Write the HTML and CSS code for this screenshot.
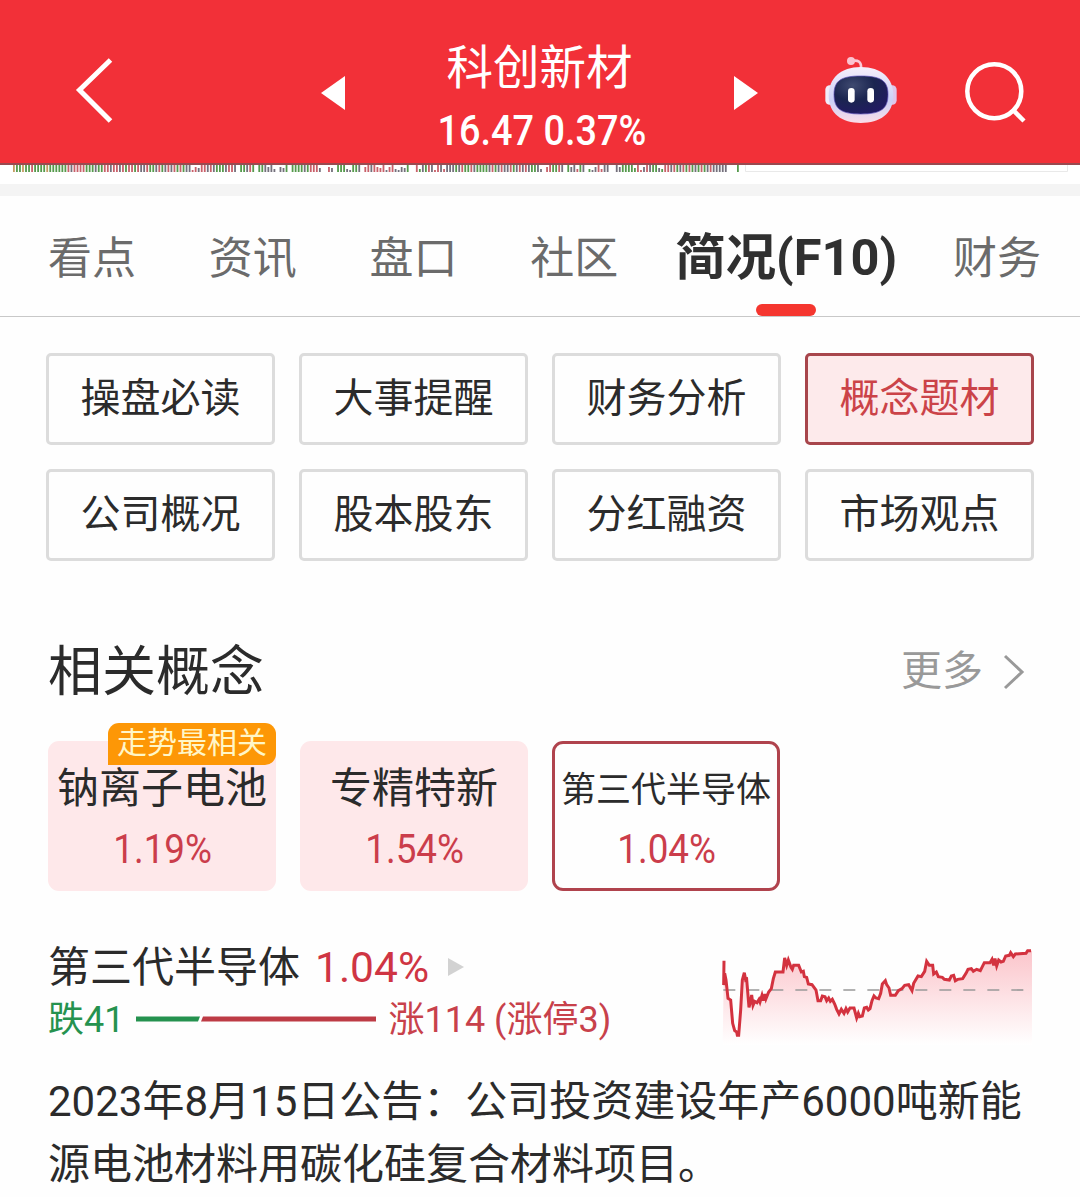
FILE: index.html
```
<!DOCTYPE html>
<html lang="zh-CN">
	<head>
		<meta charset="UTF-8">
		<title>科创新材</title>
		<link rel="stylesheet" href="styles.css">
	</head>
	<body>
		<!--顶部导航-->
		<div class="header">
			<svg class="back" width="40" height="68" viewBox="74 56 40 68"><path d="M110.500 60L79.500 90L110.500 121" /></svg>
			<svg class="prev" width="24" height="34" viewBox="0 0 24 34"><path d="M0 17L24 0V34Z" /></svg>
			<div class="stock">
				<div class="stock-name">科创新材</div>
				<div class="stock-price"><span class="din">16.47 0.37%</span></div>
			</div>
			<svg class="next" width="24" height="34" viewBox="0 0 24 34"><path d="M24 17L0 0V34Z" /></svg>
			<svg class="robot" width="74" height="70" viewBox="72 42 222 210">
				<defs>
					<linearGradient id="head" x1="0" y1="0" x2="0" y2="1">
						<stop offset="0" stop-color="#f6effb" />
						<stop offset="0.6" stop-color="#ccd0f6" />
						<stop offset="1" stop-color="#fbdde8" />
					</linearGradient>
					<radialGradient id="face" cx="0.35" cy="0.25" r="0.8">
						<stop offset="0" stop-color="#3f4a70" />
						<stop offset="0.5" stop-color="#1b2550" />
						<stop offset="1" stop-color="#221a63" />
					</radialGradient>
				</defs>
				<path d="M154 63Q186 56 183 86" fill="none" stroke="#fbc9d6" stroke-width="8" />
				<circle cx="153" cy="63" r="12" fill="#fbc3d0" />
				<rect x="76" y="136" width="30" height="58" rx="13" fill="#f1ecfa" />
				<rect x="260" y="136" width="30" height="58" rx="13" fill="#dfc6ea" />
				<path d="M182 81C245 81 280 115 280 166C280 222 240 249 182 249C126 249 86 222 86 166C86 115 122 81 182 81Z" fill="url(#head)" />
				<path d="M182 108C242 108 264 122 264 163C264 206 244 222 182 222C122 222 102 206 102 163C102 122 124 108 182 108Z" fill="url(#face)" stroke="#5a4fb8" stroke-width="2" />
				<rect x="144" y="144" width="20" height="44" rx="10" fill="#fff" />
				<rect x="202" y="144" width="20" height="44" rx="10" fill="#fff" />
			</svg>
			<svg class="search" width="64" height="64" viewBox="964 60 64 64"><circle cx="994.300" cy="91.300" r="27" /><path d="M1013 110L1024 121" /></svg>
		</div>

		<!--分时成交量-->
		<svg class="volume" id="volume" width="1080" height="19" viewBox="0 0 1080 19">
			<path d="M745.500 0V6.500H1067.500V0" fill="none" stroke="#e9e9e9" />
		</svg>

		<div class="tabs">
			<span>看点</span>
			<span>资讯</span>
			<span>盘口</span>
			<span>社区</span>
			<span class="on">简况(F10)</span>
			<span>财务</span>
		</div>

		<div class="menu">
			<div>操盘必读</div>
			<div>大事提醒</div>
			<div>财务分析</div>
			<div class="on">概念题材</div>
			<div>公司概况</div>
			<div>股本股东</div>
			<div>分红融资</div>
			<div>市场观点</div>
		</div>

		<div class="title">
			<h2>相关概念</h2>
			<span class="more">更多
				<svg width="22" height="36" viewBox="0 0 22 36"><path d="M2 2L19 18L2 34" /></svg>
			</span>
		</div>

		<!--概念卡片-->
		<div class="cards">
			<div class="card">
				<span class="badge">走势最相关</span>
				<div class="card-name">钠离子电池</div>
				<div class="card-rate"><span class="din">1.19%</span></div>
			</div>
			<div class="card">
				<div class="card-name">专精特新</div>
				<div class="card-rate"><span class="din">1.54%</span></div>
			</div>
			<div class="card on">
				<div class="card-name small">第三代半导体</div>
				<div class="card-rate"><span class="din">1.04%</span></div>
			</div>
		</div>

		<!--选中的概念-->
		<div class="concept">
			<div class="info">
				<div class="line1">
					<span>第三代半导体</span>
					<span class="rate">1.04%</span>
					<svg width="18" height="20" viewBox="0 0 18 20"><path d="M1 1L17 10L1 19Z" /></svg>
				</div>
				<div class="line2">
					<span class="down">跌41</span>
					<svg width="240" height="6" viewBox="0 0 240 6">
						<path d="M0 0.500H64L62 5.500H0Z" fill="#25924f" />
						<path d="M67 0.500H240V5.500H65Z" fill="#bd3b45" />
					</svg>
					<span class="up">涨114 (涨停3)</span>
				</div>
			</div>
			<svg class="chart" width="315" height="110" viewBox="30 30 945 330">
				<defs>
					<linearGradient id="area" x1="0" y1="0" x2="0" y2="1">
						<stop offset="0" stop-color="#fbc5cb" />
						<stop offset="1" stop-color="#fff" />
					</linearGradient>
				</defs>
				<path id="fill" fill="url(#area)" />
				<path d="M40 180H945" stroke="#999" stroke-width="5" stroke-dasharray="36 36" />
				<polyline id="line" points="42,92 41,165 44,130 48,150 54,205 62,210 68,280 74,302 80,306 82,316 86,316 92,240 97,150 103,128 107,150 110,148 117,232 122,212 125,195 129,226 134,214 141,218 147,208 150,216 156,196 160,212 165,192 168,206 176,186 184,176 190,146 196,126 219,126 224,84 230,106 235,90 243,112 247,118 251,106 266,106 274,126 280,124 283,140 290,142 295,162 306,164 318,180 324,212 332,212 337,198 345,200 350,212 356,204 361,214 367,208 374,222 380,238 387,252 394,238 402,250 408,236 413,246 420,234 432,234 440,264 445,250 449,260 457,258 463,234 470,232 475,240 480,236 486,212 492,198 498,204 506,206 512,190 517,162 526,152 530,164 537,174 542,196 556,196 565,182 576,176 584,166 596,164 606,182 611,160 624,138 634,140 644,124 650,94 658,106 668,106 671,132 679,126 685,140 697,142 703,148 718,150 724,138 731,136 736,152 743,148 758,146 768,130 774,118 784,116 790,124 800,118 811,122 823,98 840,98 846,88 851,106 855,86 860,108 866,90 873,96 880,94 887,78 898,76 902,68 910,80 916,72 948,70 953,62 963,62" />
			</svg>
		</div>

		<p class="notice">2023年8月15日公告：公司投资建设年产6000吨新能源电池材料用碳化硅复合材料项目。</p>

		<script>
			// 每分钟一根柱 g绿 r红 k灰 o橙 大写为顶满 小写为矮柱 点为空
			var bars = "OGGOGGRGGGGOGGGGGGRKRRRRGGGKGGRRKRRKRGRRGRKKRGGKRGKRKRGRGKKrrkRRKRK" +
				"GGGKRRK.GGKRG.GGKkKk.kkG.GGGGKGRRRk..rk.GGGkkGGK.rRKRrrRkrRkkkkG" +
				"..RgKGRKrRKrKKKGKRGGRKGGGGKRGKRKKRGKRKRKGGKk.rRGGRK.GkKrGK.gkkRrKK" +
				"..KkGGGGgRrkRKGGkgRRKRGKRGRGKGRGKRKKKKK...G";
			var volume = document.getElementById("volume");
			var colors = {g: "#559a4c", r: "#c9606a", k: "#74707c", o: "#c59a62"};
			for(var i = 0; i < bars.length; i++){
				var c = bars.charAt(i);
				if(c == "."){
					continue;
				}
				var low = c == c.toLowerCase();
				var barTop = low ? 2 + i % 4 : 0;
				var rect = document.createElementNS("http://www.w3.org/2000/svg", "rect");
				rect.setAttribute("x", 13 + i * 724 / (bars.length - 1));
				rect.setAttribute("y", barTop);
				rect.setAttribute("width", 1.8);
				rect.setAttribute("height", 7 - barTop);
				rect.setAttribute("fill", colors[c.toLowerCase()]);
				volume.appendChild(rect);
			}

			// 走势线下方的填充
			var points = document.getElementById("line").getAttribute("points");
			document.getElementById("fill").setAttribute("d", "M" + points + " 966,62 966,345 38,345Z");
		</script>
	</body>
</html>
```
FILE: styles.css
```
*{
	margin: 0;
	padding: 0;
	box-sizing: border-box;
}

body{
	width: 1080px;
	height: 1197px;
	overflow: hidden;
	background-color: #fefefe;
	color: #2b2b2b;
	font-family: Roboto, "Noto Sans CJK SC", sans-serif;
}

svg{
	display: block;
	flex: none;
}

/*数字压窄*/
.din{
	display: inline-block;
	transform: scaleX(0.92);
}

/*顶部*/
.header{
	display: flex;
	height: 165px;
	background-color: #f23038;
	border-bottom: 2px solid #984a50;
	color: #fff;
}

.back{
	margin: 56px 0 0 74px;
	fill: none;
	stroke: #fff;
	stroke-width: 5;
}

.prev{
	margin: 76px 0 0 207px;
	fill: #fff;
}

.stock{
	width: 389px;
	padding-top: 38px;
	text-align: center;
	white-space: nowrap;
}

.stock-name{
	height: 60px;
	line-height: 60px;
	font-size: 46.5px;
}

.stock-price{
	height: 60px;
	margin: 3px 0 0 5px;
	line-height: 60px;
	font-size: 42px;
	font-weight: 500;
}

.stock-price .din{
	transform: scaleX(0.9);
}

.next{
	margin-top: 76px;
	fill: #fff;
}

.robot{
	margin: 54px 0 0 66px;
}

.search{
	margin: 60px 0 0 66px;
	fill: none;
	stroke: #fff;
	stroke-width: 4.5;
}

.volume{
	background-color: #fff;
}

/*选项卡*/
.tabs{
	display: flex;
	justify-content: space-between;
	height: 133px;
	padding: 0 39px 0 48px;
	border-top: 12px solid #f4f4f4;
	border-bottom: 1px solid #c8c8c8;
	line-height: 127px;
	font-size: 44px;
	color: #6b6b6b;
	white-space: nowrap;
}

.tabs .on{
	position: relative;
	margin: 0 -17px 0 -16px;
	line-height: 124px;
	font-size: 50.5px;
	font-weight: bold;
	color: #303030;
}

.tabs .on::after{
	content: "";
	position: absolute;
	left: 50%;
	bottom: 0;
	width: 60px;
	height: 12px;
	margin-left: -30px;
	border-radius: 6px;
	background-color: #f5362f;
}

/*二级菜单*/
.menu{
	display: grid;
	grid-template-columns: repeat(4, 229px);
	gap: 24px;
	padding: 36px 46px 0;
}

.menu div{
	height: 92px;
	border: 3px solid #dcdcdc;
	border-radius: 5px;
	line-height: 86px;
	text-align: center;
	font-size: 40px;
}

.menu .on{
	background-color: #fdeaeb;
	border-color: #a8464c;
	color: #cb4348;
}

.title{
	display: flex;
	justify-content: space-between;
	align-items: center;
	height: 80px;
	margin-top: 66px;
	padding: 0 55px 0 48px;
}

.title h2{
	font-size: 54px;
	font-weight: normal;
}

.more{
	display: flex;
	align-items: center;
	gap: 20px;
	font-size: 41px;
	color: #999;
}

.more svg{
	margin-top: 9px;
	fill: none;
	stroke: #999;
	stroke-width: 3;
}

/*概念卡片*/
.cards{
	display: flex;
	gap: 24px;
	margin-top: 34px;
	padding-left: 48px;
}

.card{
	position: relative;
	width: 228px;
	height: 150px;
	padding-top: 18px;
	border-radius: 11px;
	background-color: #fee8ea;
	text-align: center;
	white-space: nowrap;
}

.card.on{
	padding-top: 15px;
	border: 3px solid #b0434d;
	background-color: #fefefe;
}

.card-name{
	height: 60px;
	line-height: 60px;
	font-size: 42px;
}

.card-name.small{
	line-height: 64px;
	font-size: 35px;
}

.card-rate{
	padding-left: 2px;
	line-height: 61px;
	font-size: 40px;
	color: #cb3d4b;
}

.badge{
	position: absolute;
	right: 0;
	top: -18px;
	width: 168px;
	height: 42px;
	border-radius: 11px 11px 11px 0;
	background-color: #fd9706;
	color: #fff6c8;
	line-height: 40px;
	font-size: 30px;
}

/*概念走势*/
.concept{
	display: flex;
	justify-content: space-between;
	margin-top: 49px;
	padding: 0 45px 0 48px;
}

.line1,.line2{
	display: flex;
	align-items: center;
	white-space: nowrap;
}

.line1{
	height: 46px;
	font-size: 42px;
}

.rate{
	margin: 8px 18px 0 15px;
	font-size: 42.5px;
	color: #cf3543;
}

.line1 svg{
	fill: #d2d2d2;
	margin-top: 8px;
}

.line2{
	gap: 12px;
	height: 60px;
	font-size: 36px;
}

.line2 svg{
	margin-top: 6px;
}

.down{
	color: #25924f;
}

.up{
	color: #c8414b;
}

.chart #line{
	fill: none;
	stroke: #d3323f;
	stroke-width: 9;
}

.notice{
	margin-top: 21px;
	padding: 0 48px;
	line-height: 62.5px;
	font-size: 42px;
}
```
